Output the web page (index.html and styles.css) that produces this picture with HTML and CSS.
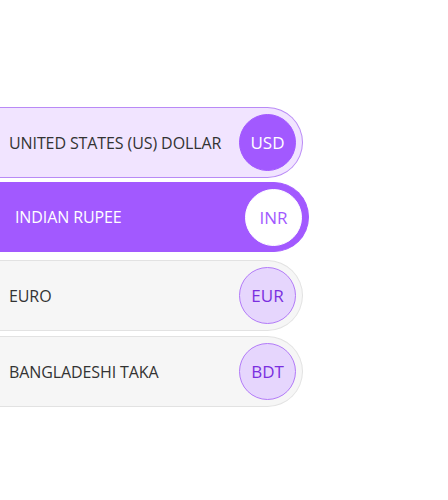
FILE: index.html
```html
<!DOCTYPE html>
<html>
<head>
<meta charset="utf-8">
<link rel="stylesheet" href="styles.css">
</head>
<body>
<ul class="list">
  <li class="row row-selected">
    <span class="name">UNITED STATES (US) DOLLAR</span>
    <span class="code">USD</span>
  </li>
  <li class="row row-active">
    <span class="name">INDIAN RUPEE</span>
    <span class="code">INR</span>
  </li>
  <li class="row">
    <span class="name">EURO</span>
    <span class="code">EUR</span>
  </li>
  <li class="row">
    <span class="name">BANGLADESHI TAKA</span>
    <span class="code">BDT</span>
  </li>
</ul>
</body>
</html>
```
FILE: styles.css
```css
html, body {
  margin: 0;
  padding: 0;
  background: #ffffff;
}
body {
  font-family: "Open Sans", sans-serif;
}
.list {
  list-style: none;
  margin: 0;
  padding: 107px 0 0 0;
  display: flex;
  flex-direction: column;
  gap: 5px;
}
.row {
  box-sizing: border-box;
  width: 320px;
  height: 71px;
  margin-left: -17px;
  padding: 0 6px 0 26px;
  display: flex;
  align-items: center;
  justify-content: space-between;
  border-radius: 0 36px 36px 0;
  background: #f6f6f6;
  border: 1px solid #e2e2e2;
  border-left: none;
}
.name {
  font-size: 16px;
  font-weight: 500;
  color: #333333;
  letter-spacing: -0.1px;
}
.code {
  box-sizing: border-box;
  width: 57px;
  height: 57px;
  border-radius: 50%;
  display: flex;
  align-items: center;
  justify-content: center;
  font-size: 17px;
  font-weight: 500;
  background: #e6d6fd;
  border: 1px solid #b27af8;
  color: #7a2fe0;
}
.row-selected {
  background: #f1e4ff;
  border-color: #b98af6;
}
.row-selected .code {
  background: #a259ff;
  border-color: #a259ff;
  color: #ffffff;
}
.row-active {
  height: 70px;
  margin-top: -1px;
  margin-bottom: 3px;
  transform: translateX(6px);
  background: #a259ff;
  border-color: #a259ff;
}
.row-active .name {
  color: #ffffff;
}
.row-active .code {
  background: #ffffff;
  border-color: #ffffff;
  color: #a259ff;
}
```
